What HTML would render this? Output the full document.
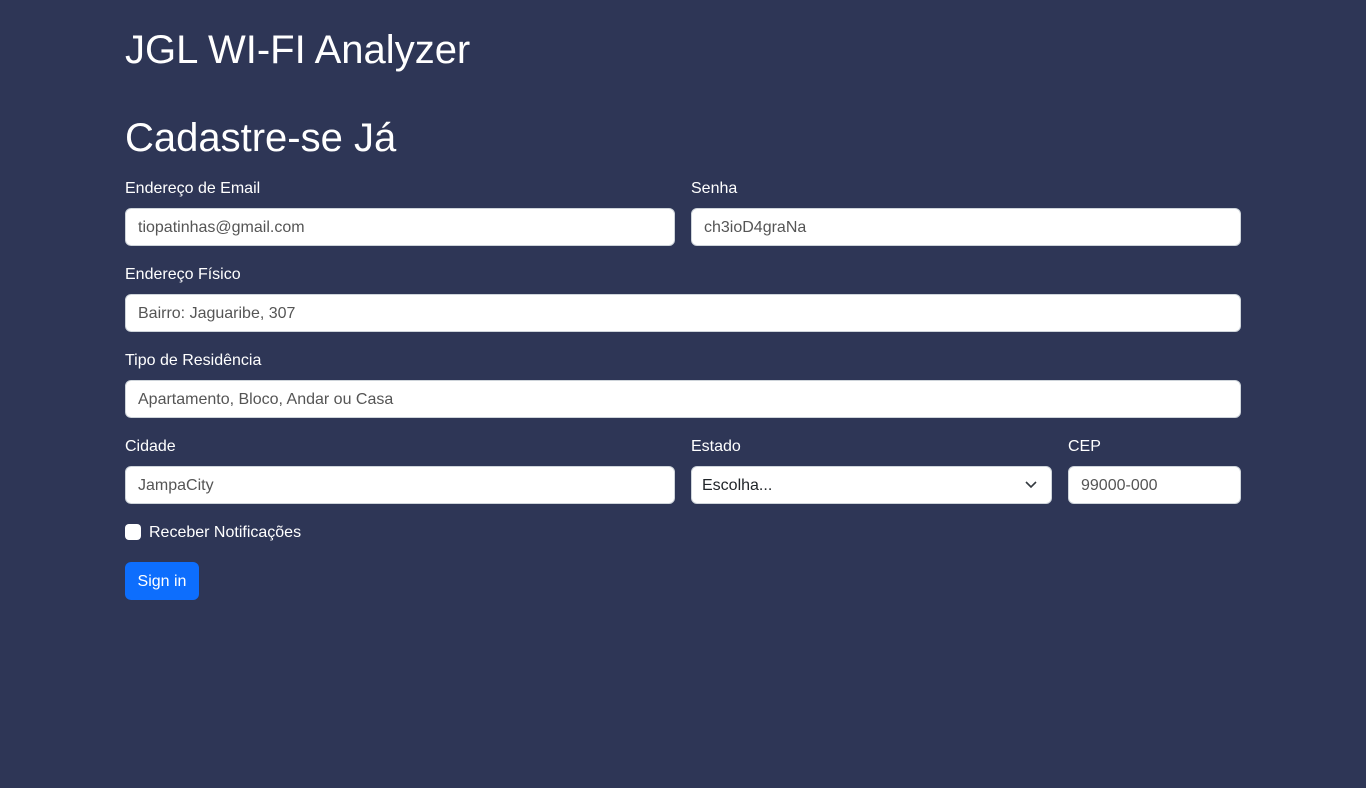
<!DOCTYPE html>
<html><head><meta charset="utf-8"><style>
body{margin:0;background:#2e3656;font-family:"Liberation Sans",sans-serif;color:#fff;width:1366px;height:788px;position:relative;overflow:hidden}
.a{position:absolute;white-space:nowrap}
h1{position:absolute;margin:0;font-weight:500;font-size:40px;left:125px;white-space:nowrap}
.l{position:absolute;font-size:16px}
.i{position:absolute;height:38px;box-sizing:border-box;background:#fff;border:1px solid #ced4da;border-radius:6px;color:#555;font-size:16px;line-height:38px;padding-left:12px}
</style></head><body>
<h1 style="top:28px">JGL WI-FI Analyzer</h1>
<h1 style="top:116px">Cadastre-se Já</h1>
<div class="l" style="left:125px;top:180px">Endereço de Email</div>
<div class="l" style="left:691px;top:180px">Senha</div>
<div class="i" style="left:125px;top:208px;width:550px">tiopatinhas@gmail.com</div>
<div class="i" style="left:691px;top:208px;width:550px">ch3ioD4graNa</div>
<div class="l" style="left:125px;top:266px">Endereço Físico</div>
<div class="i" style="left:125px;top:294px;width:1116px">Bairro: Jaguaribe, 307</div>
<div class="l" style="left:125px;top:352px">Tipo de Residência</div>
<div class="i" style="left:125px;top:380px;width:1116px">Apartamento, Bloco, Andar ou Casa</div>
<div class="l" style="left:125px;top:438px">Cidade</div>
<div class="l" style="left:691px;top:438px">Estado</div>
<div class="l" style="left:1068px;top:438px">CEP</div>
<div class="i" style="left:125px;top:466px;width:550px">JampaCity</div>
<div class="i" style="left:691px;top:466px;width:361px;color:#212529;padding-left:10px">Escolha...
<svg style="position:absolute;right:14px;top:13px" width="12" height="10" viewBox="0 0 12 10"><path d="M1 2l5 5 5-5" fill="none" stroke="#343a40" stroke-width="1.6"/></svg></div>
<div class="i" style="left:1068px;top:466px;width:173px">99000-000</div>
<div class="a" style="left:125px;top:524px;width:16px;height:16px;background:#fff;border-radius:4px"></div>
<div class="l" style="left:149px;top:524px">Receber Notificações</div>
<div class="a" style="left:125px;top:562px;width:74px;height:38px;background:#0d6efd;border-radius:6px;font-size:16px;line-height:40px;text-align:center">Sign in</div>
</body></html>
